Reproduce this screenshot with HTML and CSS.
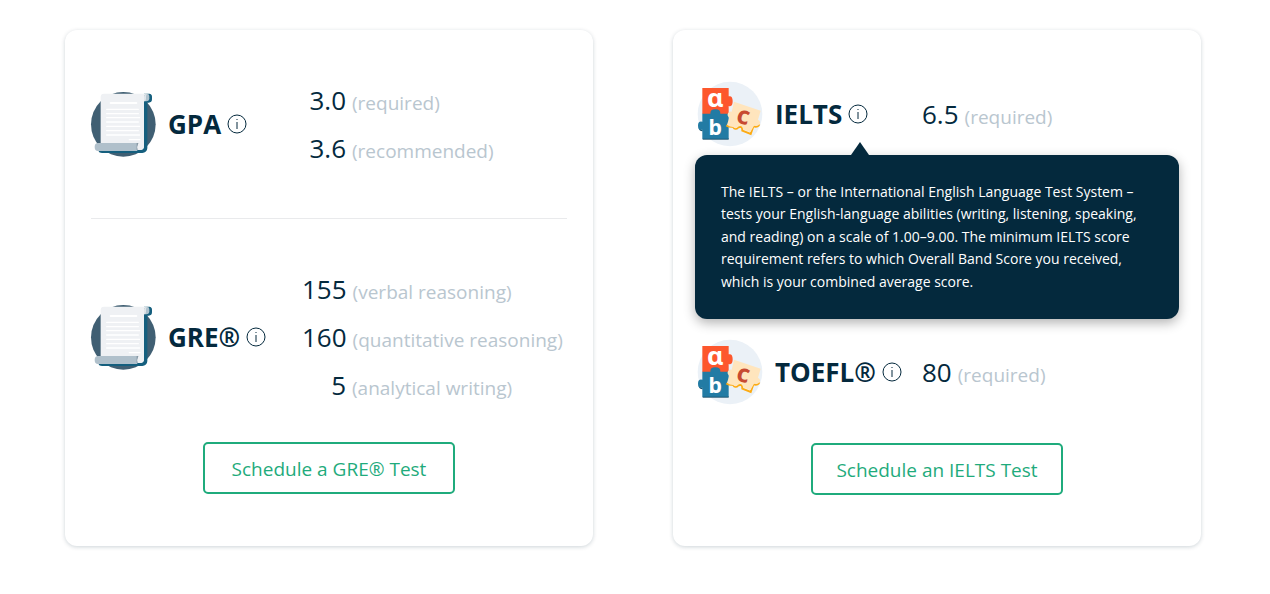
FILE: index.html
```html
<!DOCTYPE html>
<html lang="en">
<head>
<meta charset="utf-8">
<meta name="viewport" content="width=device-width, initial-scale=1">
<title>Test score requirements</title>
<link rel="stylesheet" href="styles.css">
</head>
<body>
<svg class="sprite" aria-hidden="true">
  <symbol id="scroll" viewBox="30 33 198 198">
    <circle cx="130" cy="133" r="97" fill="#405f73"/>
    <path d="M192 41h16a9 9 0 0 1 8 9v8a10 10 0 0 1-10 10h-4v136a15 15 0 0 1-15 15H66q-9 0-11-7l130-8z" fill="#155f7e"/>
    <path d="M72 41h128q-8 3-8 12v145q0 12-12 12h-12L62 190V51q0-10 10-10z" fill="#eff1f4"/>
    <path d="M192 64V52q0-11 9-11 7 0 7 9v5q0 9-9 9z" fill="#b0c3ce"/>
    <path d="M192 64V52q0-11 9-11-3 3-3 9v6q0 8-6 8z" fill="#dfe5e9"/>
    <path d="M174 189h18v9q0 12-12 12h-6z" fill="#eff1f4"/>
    <path d="M54 189h121q-5 10-3 24H54q-10 0-10-12t10-12z" fill="#b0c0cb"/>
    <path d="M175 189q-6 11-2 21h-3v-21z" fill="#8799a5"/>
    <g stroke="#fff" stroke-linecap="round">
      <path d="M92 69h77" stroke-width="6"/>
      <path d="M80 88h95M80 101h95M80 113h99M80 126h95M80 139h99M80 152h95M80 165h99M148 179h32" stroke-width="4"/>
    </g>
  </symbol>
  <symbol id="blocks" viewBox="23 18 198 198">
    <circle cx="122" cy="117" r="97" fill="#ebf1f7"/>
    <path d="M40 189h78v5H40z" fill="#174f6b"/>
    <path d="M28 157q6 9 12 7v5q-12 0-12-12z" fill="#174f6b"/>
    <path d="M39 39h79v25q12-3 12 15t-12 14v24H39z" fill="#fd572d"/>
    <path d="M39 116h24q-1-13 15-13t15 13h25v75H39v-27q-13 3-13-12t13-12z" fill="#227ba4"/>
    <path d="M111 151q8 5 20 4 7 12 16 2 13-5 12 10l25 10 8-23q13 4 18-6" fill="none" stroke="#fdab12" stroke-width="6"/>
    <path d="M134 80l80 27-8 27q9 5 5 13-7 9-16 4l-12 21-22-9q-2-15-14-9-6 11-16 2-10 0-18-7l7-21q-8-6-4-13 4-7 11-5z" fill="#ffe5bd"/>
    <g class="block-letters" text-anchor="middle">
      <text class="letter-a" x="77" y="96" fill="#fff">ɑ</text>
      <text class="letter-b" x="78" y="180" fill="#fff">b</text>
      <text class="letter-c" x="161" y="147" fill="#c84a31" transform="rotate(14 161 126)">c</text>
    </g>
  </symbol>
  <symbol id="info" viewBox="0 0 20 20">
    <circle cx="10" cy="10" r="9" fill="none" stroke="#04293d"/>
    <path d="M10 8v7M10 5v1" stroke="#04293d" fill="none"/>
  </symbol>
</svg>

<main class="cards">
  <section class="card">
    <div class="exam exam-gpa">
      <div class="exam-name">
        <svg class="exam-icon" aria-hidden="true"><use href="#scroll"/></svg>
        <h2>GPA</h2>
        <button class="info" type="button" aria-label="About GPA"><svg aria-hidden="true"><use href="#info"/></svg></button>
      </div>
      <dl class="scores">
        <div><dt>3.0</dt><dd>(required)</dd></div>
        <div><dt>3.6</dt><dd>(recommended)</dd></div>
      </dl>
    </div>
    <div class="exam exam-gre">
      <div class="exam-name">
        <svg class="exam-icon" aria-hidden="true"><use href="#scroll"/></svg>
        <h2>GRE®</h2>
        <button class="info" type="button" aria-label="About GRE"><svg aria-hidden="true"><use href="#info"/></svg></button>
      </div>
      <dl class="scores">
        <div><dt>155</dt><dd>(verbal reasoning)</dd></div>
        <div><dt>160</dt><dd>(quantitative reasoning)</dd></div>
        <div><dt>5</dt><dd>(analytical writing)</dd></div>
      </dl>
    </div>
    <button class="schedule" type="button">Schedule a GRE® Test</button>
  </section>

  <section class="card card-language">
    <div class="exam exam-ielts">
      <div class="exam-name">
        <svg class="exam-icon" aria-hidden="true"><use href="#blocks"/></svg>
        <h2>IELTS</h2>
        <button class="info" type="button" aria-label="About IELTS" aria-describedby="ielts-tip"><svg aria-hidden="true"><use href="#info"/></svg></button>
      </div>
      <dl class="scores">
        <div><dt>6.5</dt><dd>(required)</dd></div>
      </dl>
      <p class="tooltip" id="ielts-tip" role="tooltip">The IELTS – or the International English Language Test System – tests your English-language abilities (writing, listening, speaking, and reading) on a scale of 1.00–9.00. The minimum IELTS score requirement refers to which Overall Band Score you received, which is your combined average score.</p>
    </div>
    <div class="exam exam-toefl">
      <div class="exam-name">
        <svg class="exam-icon" aria-hidden="true"><use href="#blocks"/></svg>
        <h2>TOEFL®</h2>
        <button class="info" type="button" aria-label="About TOEFL"><svg aria-hidden="true"><use href="#info"/></svg></button>
      </div>
      <dl class="scores">
        <div><dt>80</dt><dd>(required)</dd></div>
      </dl>
    </div>
    <button class="schedule" type="button">Schedule an IELTS Test</button>
  </section>
</main>
</body>
</html>
```

FILE: styles.css
```css
* { box-sizing: border-box; }

body {
  margin: 0;
  background: #fff;
  color: #04293d;
  font-family: "Open Sans", "Noto Sans", sans-serif;
}

h2, dl, dd, p { margin: 0; }

.sprite { display: none; }

.block-letters {
  font-family: "Noto Sans", sans-serif;
  font-weight: 700;
}

.letter-a { font-size: 76px; }
.letter-b { font-size: 64px; }
.letter-c { font-size: 74px; }

.cards {
  display: grid;
  grid-template-columns: 1fr 1fr;
  align-items: start;
  gap: 80px;
  padding: 30px 69px 48px 65px;
}

.card {
  display: flex;
  flex-direction: column;
  padding: 0 26px 52px;
  border-radius: 12px;
  box-shadow: 0 1px 4px rgba(4, 41, 61, 0.2);
}

.card-language { padding: 0 25px 51px; }

.exam {
  display: grid;
  grid-template-columns: 211px 1fr;
  align-items: center;
}

.exam-gpa {
  padding: 46px 0;
  border-bottom: 1px solid #e9eaec;
}

.exam-gre { padding: 46px 0 33px; }

.exam-ielts,
.exam-toefl {
  position: relative;
  grid-template-columns: 224px 1fr;
}

.exam-ielts { padding: 51px 0 96px; }
.exam-toefl { padding: 96px 0 38px; }

.exam-name {
  display: flex;
  align-items: center;
}

.exam-icon {
  flex: none;
  width: 66px;
  height: 66px;
  margin-left: -1px;
}

h2 {
  margin-left: 12px;
  font-size: 26px;
  line-height: 36px;
}

.info {
  width: 20px;
  height: 20px;
  margin-left: 6px;
  padding: 0;
  border: 0;
  background: none;
  cursor: pointer;
}

.info svg {
  display: block;
  width: 20px;
  height: 20px;
}

.scores > div {
  display: flex;
  align-items: baseline;
  gap: 6px;
  height: 48px;
  line-height: 48px;
}

dt {
  min-width: 44px;
  font-size: 26px;
  text-align: right;
}

.card-language dt { min-width: 0; }

dd {
  color: #b9c6cf;
  font-size: 19px;
  white-space: nowrap;
}

.schedule {
  align-self: center;
  width: 252px;
  height: 52px;
  padding: 2px 0 0;
  border: 2px solid #1fab7c;
  border-radius: 5px;
  background: #fff;
  color: #1fab7c;
  font: 19px "Open Sans", sans-serif;
  cursor: pointer;
}

.tooltip {
  position: absolute;
  top: 125px;
  left: -3px;
  z-index: 1;
  width: 484px;
  padding: 26px;
  border-radius: 12px;
  background: #04293d;
  box-shadow: 0 4px 12px rgba(0, 0, 0, 0.3);
  color: #fff;
  font-size: 14px;
  line-height: 1.6;
}

.tooltip::before {
  content: "";
  position: absolute;
  bottom: 100%;
  left: 156px;
  border: solid transparent;
  border-width: 0 9px 13px;
  border-bottom-color: #04293d;
}
```
